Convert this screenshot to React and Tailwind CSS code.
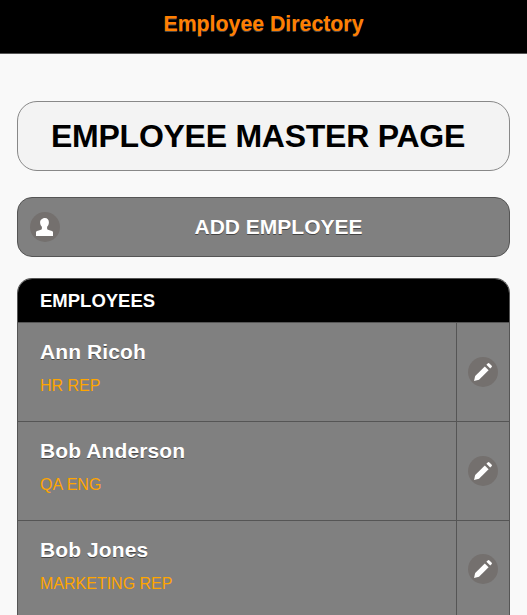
import React from 'react';

const employees = [
  { name: 'Ann Ricoh', role: 'HR REP' },
  { name: 'Bob Anderson', role: 'QA ENG' },
  { name: 'Bob Jones', role: 'MARKETING REP' },
];

const PersonIcon = () => (
  <svg width="18" height="18" viewBox="0 0 18 18" fill="#fff">
    <path d="M9 0c2.300 0 3.900 1.800 3.900 4.300 0 2-.8 3.700-1.800 4.400v1.700c0 1 1.200 1.500 3 2 1.800.5 2.900.8 2.900 1.600V18H0v-4c0-.8 1.100-1.100 2.900-1.600 1.800-.5 3-1 3-2V8.700C4.900 8 4.100 6.300 4.100 4.300 4.100 1.800 6.700 0 9 0z" />
  </svg>
);

const PencilIcon = () => (
  <svg width="18" height="18" viewBox="0 0 18 18" fill="#fff">
    <path d="M0 18l1.200-5L10.800 3.400l3.800 3.800L5 16.800z" />
    <path d="M12.400 1.800l1.300-1.300a1.200 1.200 0 0 1 1.700 0l2.100 2.100a1.200 1.200 0 0 1 0 1.700L16.200 5.600z" />
  </svg>
);

const EmployeeRow = ({ name, role }) => (
  <li className="flex h-[98.8px] border-t border-[#555] bg-[#808080]">
    <div className="flex-1 pl-[22px] pt-[17px]">
      <h2 className="text-[21px] leading-[24px] font-bold tracking-[0.1px] text-white [text-shadow:0_1px_0_#444]">{name}</h2>
      <p className="mt-[12px] text-[16px] leading-[20px] text-[#ffa500]">{role}</p>
    </div>
    <div className="flex w-[53px] items-center justify-center border-l border-[#555]">
      <span className="flex h-[30px] w-[30px] items-center justify-center rounded-full bg-[#74706e]">
        <PencilIcon />
      </span>
    </div>
  </li>
);

export default function App() {
  return (
    <div className="h-[615px] overflow-hidden bg-[#f9f9f9] font-['Liberation_Sans',Arial,sans-serif]">
      <header className="flex h-[54px] items-center justify-center border-b border-[#555] bg-black pb-[4px]">
        <h1 className="text-[21.300px] font-bold text-[#ff7f00] [text-shadow:0_1px_0_#444]">Employee Directory</h1>
      </header>

      <main className="px-[17px] pt-[47px]">
        <div className="flex h-[70px] items-center justify-center rounded-[20px] border border-[#888] bg-[#f3f3f3] pr-[11px]">
          <h2 className="text-[32px] font-bold tracking-[-0.25px] text-black">EMPLOYEE MASTER PAGE</h2>
        </div>

        <button className="relative mt-[26px] flex h-[60px] w-full items-center justify-center rounded-[15px] border border-[#555] bg-[#808080] pl-[30px]">
          <span className="absolute left-[12px] top-[14px] flex h-[30px] w-[30px] items-center justify-center rounded-full bg-[#74706e]">
            <PersonIcon />
          </span>
          <span className="text-[21px] font-bold text-white [text-shadow:0_1px_0_#444]">ADD EMPLOYEE</span>
        </button>

        <section className="mt-[21px] overflow-hidden rounded-t-[15px] border-x border-t border-[#555]">
          <div className="flex h-[43px] items-center bg-black pl-[22px]">
            <h3 className="text-[18.500px] font-bold text-white">EMPLOYEES</h3>
          </div>
          <ul>
            {employees.map((e) => (
              <EmployeeRow key={e.name} {...e} />
            ))}
          </ul>
        </section>
      </main>
    </div>
  );
}
